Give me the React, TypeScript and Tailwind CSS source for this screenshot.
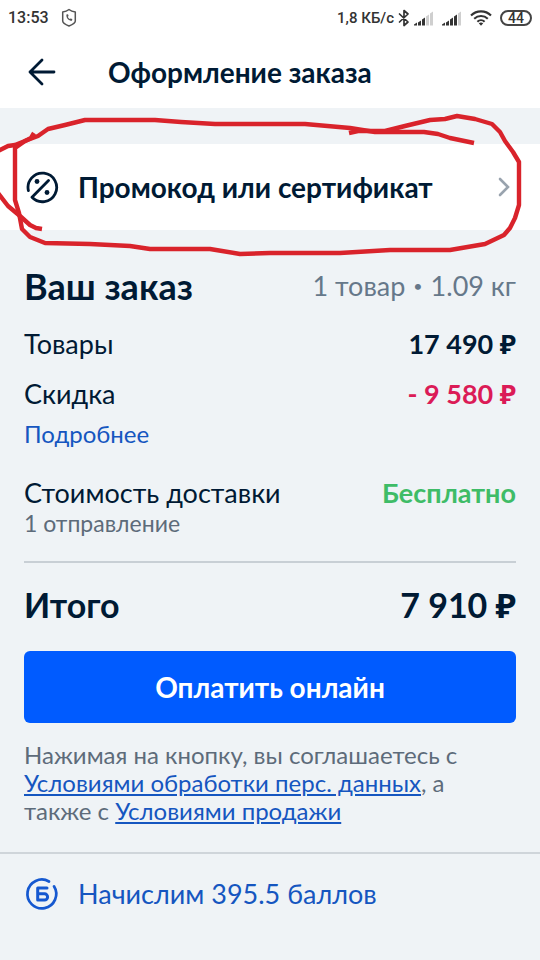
import type { ReactNode } from "react";

function ShieldPhoneIcon() {
  return (
    <svg width="16" height="20" viewBox="0 0 16 20" fill="none" stroke="#555" strokeWidth="1.5" strokeLinejoin="round">
      <path d="M8 1.500C6 3 4 3.600 1.700 4v9c0 1.600 3.600 3.900 6.300 5 2.700-1.100 6.300-3.400 6.300-5V4C12 3.600 10 3 8 1.500Z" />
      <path d="M5.400 6.400c-.4 3.600 2.100 6.200 5.600 6.400l.3-1.700-1.700-.7-.9.700c-1-.6-1.600-1.300-1.900-2.300l.8-.9-.6-1.700Z" fill="#555" stroke="none" />
    </svg>
  );
}

function BluetoothIcon() {
  return (
    <svg width="12" height="18" viewBox="0 0 12 18" fill="none" stroke="#333" strokeWidth="1.700" strokeLinejoin="round" strokeLinecap="round">
      <path d="M1.500 5 10 13 6 16.500V1.500L10 5 1.500 13" />
    </svg>
  );
}

function SignalIcon({ level }: { level: number }) {
  return (
    <svg width="20" height="16" viewBox="0 0 20 16">
      {[2, 4, 7, 10, 13].map((h, i) => (
        <path
          key={h}
          d={`M${i * 4} 15.500v${1 - h}l3-2v${h + 1}Z`}
          fill={i < level ? "#333" : "#cfcfcf"}
        />
      ))}
    </svg>
  );
}

function WifiIcon() {
  return (
    <svg width="22" height="18" viewBox="0 0 22 18" fill="none" stroke="#333" strokeWidth="2.100">
      <path d="M1 6.500C6.500 1 15.500 1 21 6.500" />
      <path d="M4.200 9.700c3.800-3.600 9.800-3.600 13.600 0" />
      <path d="M7.400 12.700c2-1.900 5.200-1.900 7.200 0" />
      <path d="M8.800 14.300c1.200-1 3.200-1 4.400 0L11 16.700Z" fill="#333" stroke="none" />
    </svg>
  );
}

function BackIcon() {
  return (
    <svg width="28" height="28" viewBox="0 0 28 28" fill="none" stroke="#001a34" strokeWidth="2.800" strokeLinecap="round" strokeLinejoin="round">
      <path d="M26 14H2M14 2 2 14l12 12" />
    </svg>
  );
}

function PromoIcon() {
  return (
    <svg width="36" height="36" viewBox="0 0 36 36" fill="none" stroke="#001a34" strokeWidth="2.800" strokeLinecap="round" strokeLinejoin="round">
      <path d="M4.400 21.600A14.300 14.300 0 1 1 8 28.300L24.500 11.500" />
      <circle cx="13" cy="12.500" r="2.400" fill="#001a34" stroke="none" />
      <circle cx="23" cy="23.500" r="2.400" fill="#001a34" stroke="none" />
    </svg>
  );
}

function ChevronIcon() {
  return (
    <svg width="12" height="20" viewBox="0 0 12 20" fill="none" stroke="#99a3ae" strokeWidth="2.600" strokeLinecap="round">
      <path d="m2 2 8 8-8 8" />
    </svg>
  );
}

function PointsIcon() {
  return (
    <svg width="36" height="36" viewBox="0 0 36 36" fill="none" stroke="#1558d0" strokeWidth="2.700" strokeLinecap="round">
      <path d="M25 5.500A14.400 14.400 0 1 0 30 10.300" />
      <path d="M23 12H13.700v12h6.800a3.100 3.100 0 0 0 0-6.200h-6.800" strokeWidth="3" strokeLinejoin="round" />
    </svg>
  );
}

function MarkerOutline() {
  return (
    <svg className="pointer-events-none absolute inset-x-0 -top-9 w-full" viewBox="0 108 540 152" fill="none" stroke="#d9232b" strokeWidth="4.400" strokeLinejoin="round" aria-hidden="true">
      <path d="M-2 151 8 146 15 145 30 139 38 136 48 129 65 125 85 120H155L181 122 215 124H305L350 128 375 132H424L438 134 450 138 474 143" />
      <path d="M349 133 358 131H385L405 126 430 120 445 119 457 116 475 119 492 124 500 132 505 141 513 152 519 162V205L515 218 510 228 504 235 485 244 450 250H390L340 253H270L240 254 210 249H150L130 246 90 244 45 243 30 237 22 229 19 213 15 200V148L25 141 31 138 34 133" />
      <path d="M-2 193 8 206 20 216 30 225 36 228 42 229" />
    </svg>
  );
}

function Row({ label, children }: { label: string; children: ReactNode }) {
  return (
    <div className="flex items-center justify-between text-[27px] leading-8">
      <dt>{label}</dt>
      <dd className="font-bold">{children}</dd>
    </div>
  );
}

export default function App() {
  return (
    <div className="min-h-screen bg-[#eff3f6] font-['Lato','Noto_Sans',sans-serif] text-[#001a34]">
      <div className="flex h-9 items-center justify-between bg-white px-2 font-['Roboto',sans-serif] font-medium text-[#333]">
        <div className="flex items-center gap-3 text-base">
          <span>13:53</span>
          <ShieldPhoneIcon />
        </div>
        <div className="flex items-center text-[15px]">
          <span className="mr-1">1,8 КБ/с</span>
          <BluetoothIcon />
          <div className="ml-1 mr-2 flex gap-2">
            <SignalIcon level={3} />
            <SignalIcon level={4} />
          </div>
          <WifiIcon />
          <span className="ml-2 flex h-4 w-8 items-center justify-center rounded-full border-2 border-[#444] text-sm leading-3">44</span>
        </div>
      </div>

      <header className="flex h-18 items-center gap-13 bg-white px-7">
        <button type="button" aria-label="Назад">
          <BackIcon />
        </button>
        <h1 className="text-[28px] font-bold leading-8">Оформление заказа</h1>
      </header>

      <div className="relative mt-9">
        <button type="button" className="flex h-[86px] w-full items-center gap-[18px] bg-white pl-6 pr-[30px] text-left text-[28px] font-bold">
          <PromoIcon />
          <span className="flex-1">Промокод или сертификат</span>
          <ChevronIcon />
        </button>
        <MarkerOutline />
      </div>

      <main className="px-6 pt-8">
        <div className="flex h-12 items-center justify-between">
          <h2 className="text-4xl font-bold">Ваш заказ</h2>
          <span className="flex items-center gap-2 text-[27px] text-[#66788a]">
            1 товар <span className="text-base">•</span> 1.09 кг
          </span>
        </div>

        <dl className="mt-[18px]">
          <Row label="Товары">17 490 ₽</Row>
          <div className="mt-[18px]">
            <Row label="Скидка">
              <span className="text-[#db1b57]">- 9 580 ₽</span>
            </Row>
          </div>
        </dl>
        <a href="#discount" className="mt-2 block w-fit text-2xl text-[#1556c0]">Подробнее</a>

        <dl className="mt-[27px]">
          <Row label="Стоимость доставки">
            <span className="text-[#3ebc67]">Бесплатно</span>
          </Row>
        </dl>
        <p className="text-[23px] leading-7 text-[#5d6b7a]">1 отправление</p>

        <div className="mt-6 flex items-center justify-between border-t-2 border-[#c8cfd5] pt-5 text-[34px] font-bold leading-11">
          <span>Итого</span>
          <span>7 910 ₽</span>
        </div>

        <button type="button" className="mt-6 h-18 w-full rounded-md bg-[#005bff] text-[28px] font-bold text-white">
          Оплатить онлайн
        </button>

        <p className="mt-[18px] text-2xl leading-7 text-[#5d6b7a]">
          Нажимая на кнопку, вы соглашаетесь с{" "}
          <a href="#privacy" className="text-[#1556c0] underline">Условиями обработки перс. данных</a>, а также с{" "}
          <a href="#terms" className="text-[#1556c0] underline">Условиями продажи</a>
        </p>
      </main>

      <footer className="mt-[27px] flex items-center gap-[18px] border-t-2 border-[#cfd5da] px-6 pt-5 text-[27px] leading-10 text-[#1556c0]">
        <PointsIcon />
        <span>Начислим 395.5 баллов</span>
      </footer>
    </div>
  );
}
